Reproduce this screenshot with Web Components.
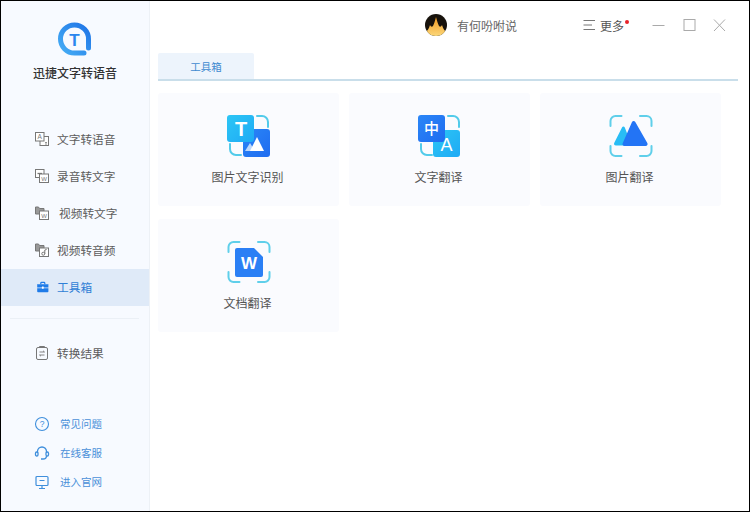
<!DOCTYPE html>
<html lang="zh">
<head>
<meta charset="utf-8">
<title>迅捷文字转语音</title>
<style>
    html, body { margin: 0; padding: 0; background: #000; }
    body { font-family: "Noto Sans CJK SC", "Liberation Sans", sans-serif; }
    svg { display: block; }
</style>
</head>
<body>
<app-shell>
    <side-nav slot="side">
        <nav-item slot="main" label="文字转语音">
            <svg slot="icon" width="16" height="16" viewBox="0 0 16 16" fill="#fff" stroke="#777" stroke-width="1"><rect x="6" y="5.500" width="8.500" height="9"/><rect x="1.500" y="1.500" width="8.500" height="8.500"/><text x="5.700" y="8.200" font-size="6.500" font-family="Liberation Sans" text-anchor="middle" fill="#777" stroke="none">A</text><path d="M11 11.500h2M11 13h2" stroke-width=".8"/></svg>
        </nav-item>
        <nav-item slot="main" label="录音转文字">
            <svg slot="icon" width="16" height="16" viewBox="0 0 16 16" fill="#fff" stroke="#777" stroke-width="1"><rect x="1.500" y="1.500" width="8.500" height="8"/><path d="M3.500 5.500h4.500" stroke-width="1.300"/><rect x="5.500" y="6" width="9" height="8.500"/><text x="10" y="12.800" font-size="6" font-family="Liberation Sans" text-anchor="middle" fill="#777" stroke="none">W</text></svg>
        </nav-item>
        <nav-item slot="main" label="视频转文字" shift="2">
            <svg slot="icon" width="16" height="16" viewBox="0 0 16 16" fill="#fff" stroke="#777" stroke-width="1"><path d="M1.500 2h3l1 1.500h4.500v5.500h-8.500z" fill="#999"/><rect x="5.500" y="6" width="9" height="8.500"/><text x="10" y="12.800" font-size="6" font-family="Liberation Sans" text-anchor="middle" fill="#777" stroke="none">W</text></svg>
        </nav-item>
        <nav-item slot="main" label="视频转音频">
            <svg slot="icon" width="16" height="16" viewBox="0 0 16 16" fill="#fff" stroke="#777" stroke-width="1"><path d="M1.500 2h3l1 1.500h4.500v5.500h-8.500z" fill="#999"/><rect x="5.500" y="6" width="9" height="8.500"/><circle cx="9.300" cy="11.700" r="1.500" fill="none"/><path d="M10.800 11.700V8l1.800-.5" fill="none"/></svg>
        </nav-item>
        <nav-item slot="main" label="工具箱" active>
            <svg slot="icon" width="16" height="16" viewBox="-3 -2.500 20 20"><path d="M5.500 4V2.800c0-.6.400-1 1-1h3c.6 0 1 .4 1 1V4" fill="none" stroke="#1f7be8" stroke-width="1.500"/><path d="M1.500 4h13c.4 0 .5.200.5.500V8H1V4.500c0-.3.100-.5.500-.5z" fill="#1f7be8"/><path d="M1 9h14v4c0 .6-.4 1-1 1H2c-.6 0-1-.4-1-1z" fill="#1f7be8"/><rect x="6.800" y="7" width="2.400" height="2.600" rx=".5" fill="#fff"/></svg>
        </nav-item>
        <nav-item slot="result" label="转换结果">
            <svg slot="icon" width="16" height="16" viewBox="0 0 16 16" fill="none" stroke="#777" stroke-width="1"><rect x="2.500" y="2.500" width="11" height="12" rx="1.500"/><path d="M5.500 2.500v-1h5v1" /><path d="M5.500 7h5l-1.500-1.200M10.500 10h-5l1.500 1.200" stroke-width=".9"/></svg>
        </nav-item>
        <help-link slot="help" label="常见问题">
            <svg slot="icon" width="16" height="16" viewBox="0 0 16 16" fill="none" stroke="#3f8fdc" stroke-width="1.100"><circle cx="8" cy="8" r="6.500"/><text x="8" y="11" font-size="8.500" font-family="Liberation Sans" text-anchor="middle" fill="#3f8fdc" stroke="none">?</text></svg>
        </help-link>
        <help-link slot="help" label="在线客服">
            <svg slot="icon" width="16" height="16" viewBox="0 0 16 16" fill="none" stroke="#3f8fdc" stroke-width="1.300"><path d="M3.500 8V6.500a4.500 4.500 0 0 1 9 0V8"/><rect x="1.500" y="7" width="2.500" height="4" rx="1.200"/><rect x="12" y="7" width="2.500" height="4" rx="1.200"/><path d="M12.500 11c0 2-1.500 3-3.500 3"/><circle cx="8" cy="14" r="1" fill="#3f8fdc" stroke="none"/></svg>
        </help-link>
        <help-link slot="help" label="进入官网">
            <svg slot="icon" width="16" height="16" viewBox="0 0 16 16" fill="none" stroke="#3f8fdc" stroke-width="1.200"><rect x="2" y="2.500" width="12" height="9" rx="1"/><path d="M5.500 6.500h5M8 11.500v3M5 14.500h6"/></svg>
        </help-link>
    </side-nav>

    <title-bar slot="top"></title-bar>
    <tool-tab slot="tab">工具箱</tool-tab>

    <tool-card slot="cards" label="图片文字识别">
        <svg slot="icon" width="44" height="44" viewBox="0 0 44 44" fill="none">
            <defs>
                <linearGradient id="c1" x1="0" y1="0" x2="1" y2="1"><stop offset="0" stop-color="#2cc6f5"/><stop offset="1" stop-color="#1faaf5"/></linearGradient>
                <linearGradient id="b1" x1="0" y1="0" x2="1" y2="1"><stop offset="0" stop-color="#2a86f7"/><stop offset="1" stop-color="#1f6cf0"/></linearGradient>
            </defs>
            <path d="M30 2h5a6 6 0 0 1 6 6v5M3 30v5a6 6 0 0 0 6 6h5" stroke="#52cbea" stroke-width="2" stroke-linecap="round"/>
            <rect x="16" y="15" width="27" height="28" rx="3" fill="url(#b1)"/>
            <rect x="0" y="1" width="27" height="27" rx="3" fill="url(#c1)"/>
            <text x="14" y="21.500" font-size="20" font-weight="700" font-family="Liberation Sans" text-anchor="middle" fill="#fff">T</text>
            <path d="M18 37l5-8 5 8z" fill="#bcd7fb"/>
            <path d="M23 37l7-14 7 14z" fill="#fff"/>
        </svg>
    </tool-card>
    <tool-card slot="cards" label="文字翻译">
        <svg slot="icon" width="44" height="44" viewBox="0 0 44 44" fill="none">
            <defs>
                <linearGradient id="c2" x1="0" y1="0" x2="1" y2="1"><stop offset="0" stop-color="#2cc6f5"/><stop offset="1" stop-color="#1faaf5"/></linearGradient>
                <linearGradient id="b2" x1="0" y1="0" x2="1" y2="1"><stop offset="0" stop-color="#2a86f7"/><stop offset="1" stop-color="#1f6cf0"/></linearGradient>
            </defs>
            <path d="M30 2h5a6 6 0 0 1 6 6v5M3 30v5a6 6 0 0 0 6 6h5" stroke="#52cbea" stroke-width="2" stroke-linecap="round"/>
            <rect x="15" y="16" width="27" height="27" rx="3" fill="url(#c2)"/>
            <rect x="0" y="1" width="27" height="27" rx="3" fill="url(#b2)"/>
            <text x="13.500" y="20" font-size="15" font-weight="500" font-family="Noto Sans CJK SC" text-anchor="middle" fill="#fff">中</text>
            <text x="28.500" y="37" font-size="18" font-family="Liberation Sans" text-anchor="middle" fill="#fff">A</text>
        </svg>
    </tool-card>
    <tool-card slot="cards" label="图片翻译">
        <svg slot="icon" width="44" height="44" viewBox="0 0 44 44" fill="none">
            <path d="M1.500 12V7a5 5 0 0 1 5-5h6M31 2h6.500a5 5 0 0 1 5 5v5M1.500 32v5a5 5 0 0 0 5 5h6M42.500 32v5a5 5 0 0 1-5 5H31" stroke="#5fcfea" stroke-width="2" stroke-linecap="round"/>
            <path d="M13 13.500c.6-1.200 2.200-1.200 2.800 0l7 18H7c-1.600 0-2.500-1.400-1.700-2.800z" fill="#28bdf5"/>
            <path d="M23 8c.8-1.300 2.500-1.300 3.300 0l12 21c.8 1.300-.1 3-1.700 3H15.500c-1.600 0-2.500-1.700-1.700-3z" fill="#2374f5"/>
        </svg>
    </tool-card>
    <tool-card slot="cards" label="文档翻译">
        <svg slot="icon" width="44" height="44" viewBox="0 0 44 44" fill="none">
            <path d="M1.500 12V7a5 5 0 0 1 5-5h6M31 2h6.500a5 5 0 0 1 5 5v5M1.500 32v5a5 5 0 0 0 5 5h6M42.500 32v5a5 5 0 0 1-5 5H31" stroke="#5fcfea" stroke-width="2" stroke-linecap="round"/>
            <path d="M10 8h17l9 9v18a2 2 0 0 1-2 2H10a2 2 0 0 1-2-2V10a2 2 0 0 1 2-2z" fill="#2a7ff5"/>
            <text x="22" y="29" font-size="17" font-weight="700" font-family="Liberation Sans" text-anchor="middle" fill="#fff">W</text>
        </svg>
    </tool-card>
</app-shell>

<script>
class AppShell extends HTMLElement {
    constructor() {
        super();
        this.attachShadow({mode: 'open'}).innerHTML = `
            <style>
                :host {
                    display: flex;
                    box-sizing: border-box;
                    width: 750px;
                    height: 512px;
                    border-style: solid;
                    border-color: #000;
                    border-width: 1px 1px 1.500px 1px;
                    background: #fff;
                    overflow: hidden;
                }
                .main { flex: 1; display: flex; flex-direction: column; min-width: 0; }
                .tabs {
                    margin: 0 11px 0 8px;
                    border-bottom: 2px solid #c9deea;
                    display: flex;
                }
                .cards {
                    display: grid;
                    grid-template-columns: repeat(3, 181px);
                    grid-auto-rows: 113px;
                    column-gap: 10px;
                    row-gap: 13px;
                    padding: 12px 0 0 8px;
                }
            </style>
            <slot name="side"></slot>
            <div class="main">
                <slot name="top"></slot>
                <div class="tabs"><slot name="tab"></slot></div>
                <div class="cards"><slot name="cards"></slot></div>
            </div>`;
    }
}

class SideNav extends HTMLElement {
    constructor() {
        super();
        this.attachShadow({mode: 'open'}).innerHTML = `
            <style>
                :host {
                    display: flex;
                    flex-direction: column;
                    flex: none;
                    box-sizing: border-box;
                    width: 149px;
                    height: 100%;
                    background: #f7faff;
                    border-right: 1px solid #edf1f6;
                }
                .brand {
                    height: 120px;
                    display: flex;
                    flex-direction: column;
                    align-items: center;
                    box-sizing: border-box;
                    padding-top: 20px;
                }
                .brand h1 {
                    margin: 7px 0 0;
                    font-size: 12px;
                    line-height: 18px;
                    font-weight: 500;
                    color: #333;
                }
                hr {
                    border: 0;
                    height: 1px;
                    background: #ebf0f6;
                    margin: 12px 10px 16px 9px;
                }
                .help { margin-top: auto; padding-bottom: 15px; display: flex; flex-direction: column; }
            </style>
            <div class="brand">
                <svg width="36" height="36" viewBox="0 0 36 36" fill="none">
                    <defs>
                        <linearGradient id="logo" x1="0" y1="1" x2="1" y2="0">
                            <stop offset="0" stop-color="#46aef5"/>
                            <stop offset="1" stop-color="#1f74e6"/>
                        </linearGradient>
                    </defs>
                    <path d="M31.500 27V18A14 14 0 1 0 17.500 32H27" stroke="url(#logo)" stroke-width="5" stroke-linecap="round" stroke-linejoin="round"/>
                    <text x="17.500" y="25" font-size="17" font-weight="700" font-family="Liberation Sans" text-anchor="middle" fill="#2a86ee">T</text>
                </svg>
                <h1>迅捷文字转语音</h1>
            </div>
            <slot name="main"></slot>
            <hr>
            <slot name="result"></slot>
            <div class="help"><slot name="help"></slot></div>`;
    }
}

class NavItem extends HTMLElement {
    constructor() {
        super();
        this.attachShadow({mode: 'open'}).innerHTML = `
            <style>
                :host {
                    display: flex;
                    align-items: center;
                    box-sizing: border-box;
                    height: 37px;
                    padding: 0 0 2px 33px;
                    font-size: 11.700px;
                    color: #5c5c5c;
                }
                :host([active]) { background: #dfeaf8; color: #2f7fd6; }
                span { margin-left: 7px; white-space: nowrap; }
            </style>
            <slot name="icon"></slot>
            <span></span>`;
    }

    connectedCallback() {
        const label = this.shadowRoot.querySelector('span');
        label.textContent = this.getAttribute('label');
        if (this.hasAttribute('shift')) {
            label.style.marginLeft = (7 + Number(this.getAttribute('shift'))) + 'px';
        }
    }
}

class HelpLink extends HTMLElement {
    constructor() {
        super();
        this.attachShadow({mode: 'open'}).innerHTML = `
            <style>
                :host {
                    display: flex;
                    align-items: center;
                    height: 29px;
                    padding-left: 33px;
                    font-size: 10.500px;
                    color: #4a90d9;
                }
                span { margin-left: 10px; white-space: nowrap; }
            </style>
            <slot name="icon"></slot>
            <span></span>`;
    }

    connectedCallback() {
        this.shadowRoot.querySelector('span').textContent = this.getAttribute('label');
    }
}

class TitleBar extends HTMLElement {
    constructor() {
        super();
        this.attachShadow({mode: 'open'}).innerHTML = `
            <style>
                :host {
                    display: flex;
                    align-items: center;
                    box-sizing: border-box;
                    height: 52px;
                    padding: 0 21px 4px 275px;
                    font-size: 12px;
                    color: #666;
                    flex: none;
                }
                .name { margin-left: 10px; width: 126px; white-space: nowrap; }
                .more { margin-left: 4px; color: #555; position: relative; white-space: nowrap; }
                .more i {
                    position: absolute;
                    right: -5px;
                    top: 3px;
                    width: 4px;
                    height: 4px;
                    border-radius: 50%;
                    background: #e8222a;
                }
                .win { display: flex; gap: 17.500px; margin-left: 28px; }
            </style>
            <svg width="22" height="22" viewBox="0 0 22 22">
                <defs>
                    <linearGradient id="flame" x1="0" y1="0" x2="0" y2="1">
                        <stop offset="0" stop-color="#f29a1f"/>
                        <stop offset="1" stop-color="#fbd77a"/>
                    </linearGradient>
                    <clipPath id="round"><circle cx="11" cy="11" r="11"/></clipPath>
                </defs>
                <circle cx="11" cy="11" r="11" fill="#17120c"/>
                <path clip-path="url(#round)" d="M0 18c3-1 4-4 5-7 1 2 2 2 3 1 1-2 2-5 3-9 1 4 2 7 3 9 1 1 2 1 3-1 1 3 2 6 5 7v4H0z" fill="url(#flame)"/>
            </svg>
            <span class="name">有何吩咐说</span>
            <svg width="13" height="12" viewBox="0 0 13 12" fill="none" stroke="#777" stroke-width="1.200"><path d="M.5 1.500h11.500M.5 6h8.500M.5 10.500h11.500"/></svg>
            <span class="more">更多<i></i></span>
            <div class="win">
                <svg width="13" height="13" viewBox="0 0 13 13" fill="none" stroke="#aaa"><path d="M.5 6.500h12"/></svg>
                <svg width="13" height="13" viewBox="0 0 13 13" fill="none" stroke="#aaa"><rect x="1" y=".5" width="11" height="11"/></svg>
                <svg width="13" height="13" viewBox="0 0 13 13" fill="none" stroke="#aaa"><path d="M1 .5l11 11.500M12 .5L1 12"/></svg>
            </div>`;
    }
}

class ToolTab extends HTMLElement {
    constructor() {
        super();
        this.attachShadow({mode: 'open'}).innerHTML = `
            <style>
                :host {
                    display: flex;
                    align-items: center;
                    justify-content: center;
                    width: 96px;
                    height: 26px;
                    background: #edf4fc;
                    color: #3f8ad0;
                    font-size: 10.500px;
                    border-radius: 2px 2px 0 0;
                }
            </style>
            <slot></slot>`;
    }
}

class ToolCard extends HTMLElement {
    constructor() {
        super();
        this.attachShadow({mode: 'open'}).innerHTML = `
            <style>
                :host {
                    display: flex;
                    flex-direction: column;
                    align-items: center;
                    box-sizing: border-box;
                    padding: 21px 2px 0 0;
                    background: #fafbfe;
                    border-radius: 3px;
                    font-size: 12px;
                    color: #555;
                }
                ::slotted(svg) { margin-left: 2px; }
                span { margin-top: 10px; line-height: 18px; white-space: nowrap; }
            </style>
            <slot name="icon"></slot>
            <span></span>`;
    }

    connectedCallback() {
        this.shadowRoot.querySelector('span').textContent = this.getAttribute('label');
    }
}

customElements.define('app-shell', AppShell);
customElements.define('side-nav', SideNav);
customElements.define('nav-item', NavItem);
customElements.define('help-link', HelpLink);
customElements.define('title-bar', TitleBar);
customElements.define('tool-tab', ToolTab);
customElements.define('tool-card', ToolCard);
</script>
</body>
</html>
